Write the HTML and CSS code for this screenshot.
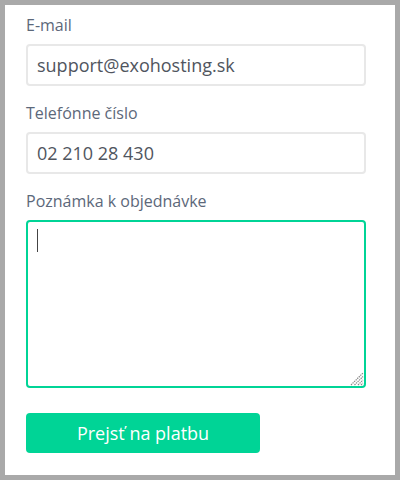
FILE: index.html
```html
<!DOCTYPE html>
<html lang="sk">
<head>
<meta charset="utf-8">
<link rel="stylesheet" href="styles.css">
</head>
<body>
<div class="panel">
  <form class="form">
    <label class="field">
      <span class="label">E-mail</span>
      <input class="input" type="text" value="support@exohosting.sk">
    </label>
    <label class="field">
      <span class="label">Telefónne číslo</span>
      <input class="input" type="text" value="02 210 28 430">
    </label>
    <label class="field">
      <span class="label">Poznámka k objednávke</span>
      <span class="textarea-wrap">
        <textarea class="textarea"></textarea>
        <span class="caret"></span>
        <svg class="grip" width="14" height="14" viewBox="0 0 14 14">
          <g stroke="#8a8a8a" stroke-width="1.2" stroke-dasharray="1.4 0.8">
            <line x1="1" y1="13" x2="13" y2="1"/>
            <line x1="4.5" y1="13" x2="13" y2="4.5"/>
            <line x1="8" y1="13" x2="13" y2="8"/>
            <line x1="11" y1="13" x2="13" y2="11"/>
          </g>
        </svg>
      </span>
    </label>
    <button class="btn" type="button">Prejsť na platbu</button>
  </form>
</div>
</body>
</html>
```
FILE: styles.css
```css
* { box-sizing: border-box; }
html, body { margin: 0; padding: 0; }
body {
  background: #a9a9a9;
  padding: 5px;
  width: 400px;
  height: 480px;
  font-family: "Open Sans", "Liberation Sans", sans-serif;
}
.panel {
  background: #fff;
  width: 390px;
  height: 470px;
  padding: 10px 29px 0 21px;
}
.form { display: flex; flex-direction: column; }
.field { display: flex; flex-direction: column; }
.label {
  font-size: 16px;
  line-height: 20px;
  color: #5c687a;
  margin-bottom: 9px;
}
.input {
  height: 42px;
  border: 2px solid #e8e8e8;
  border-radius: 4px;
  padding: 0 9px;
  font-family: inherit;
  font-size: 18px;
  color: #50555e;
  margin-bottom: 17px;
  outline: none;
}
.textarea-wrap { position: relative; display: block; }
.textarea {
  display: block;
  width: 100%;
  height: 168px;
  border: 2px solid #00d496;
  border-radius: 4px;
  resize: none;
  outline: none;
  font-family: inherit;
  font-size: 17px;
}
.caret {
  position: absolute;
  left: 11px;
  top: 9px;
  width: 1px;
  height: 23px;
  background: #444;
}
.grip {
  position: absolute;
  right: 2px;
  bottom: 2px;
}
.btn {
  margin-top: 25px;
  width: 234px;
  height: 40px;
  background: #00d496;
  border: none;
  border-radius: 4px;
  color: #fff;
  font-family: inherit;
  font-size: 18px;
  padding: 0;
  text-align: center;
}
```
